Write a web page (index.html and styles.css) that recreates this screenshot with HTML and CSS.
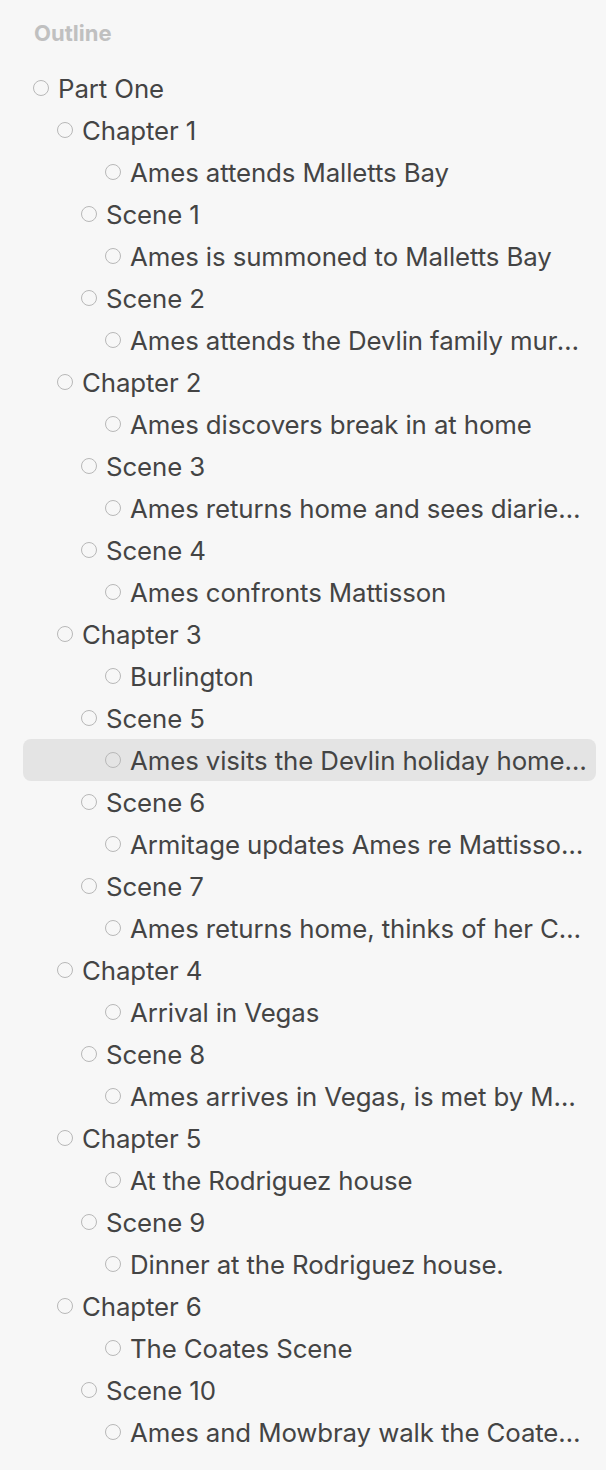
FILE: index.html
```html
<!DOCTYPE html>
<html lang="en">
<head>
  <meta charset="UTF-8" />
  <meta name="viewport" content="width=device-width, initial-scale=1.0"/>
  <title>Outline</title>
  <link rel="stylesheet" href="styles.css">
</head>
<body>
  <div class="sidebar">
    <h2 class="heading">Outline</h2>
    <ul class="outline">
      <li class="row lvl-0"><span class="label">Part One</span></li>
      <li class="row lvl-1"><span class="label">Chapter 1</span></li>
      <li class="row lvl-3"><span class="label">Ames attends Malletts Bay</span></li>
      <li class="row lvl-2"><span class="label">Scene 1</span></li>
      <li class="row lvl-3"><span class="label">Ames is summoned to Malletts Bay</span></li>
      <li class="row lvl-2"><span class="label">Scene 2</span></li>
      <li class="row lvl-3"><span class="label">Ames attends the Devlin family murder scene</span></li>
      <li class="row lvl-1"><span class="label">Chapter 2</span></li>
      <li class="row lvl-3"><span class="label">Ames discovers break in at home</span></li>
      <li class="row lvl-2"><span class="label">Scene 3</span></li>
      <li class="row lvl-3"><span class="label">Ames returns home and sees diaries have been moved</span></li>
      <li class="row lvl-2"><span class="label">Scene 4</span></li>
      <li class="row lvl-3"><span class="label">Ames confronts Mattisson</span></li>
      <li class="row lvl-1"><span class="label">Chapter 3</span></li>
      <li class="row lvl-3"><span class="label">Burlington</span></li>
      <li class="row lvl-2"><span class="label">Scene 5</span></li>
      <li class="row lvl-3 selected"><span class="label">Ames visits the Devlin holiday home, Burlington</span></li>
      <li class="row lvl-2"><span class="label">Scene 6</span></li>
      <li class="row lvl-3"><span class="label">Armitage updates Ames re Mattisson's alibi</span></li>
      <li class="row lvl-2"><span class="label">Scene 7</span></li>
      <li class="row lvl-3"><span class="label">Ames returns home, thinks of her Criminology class</span></li>
      <li class="row lvl-1"><span class="label">Chapter 4</span></li>
      <li class="row lvl-3"><span class="label">Arrival in Vegas</span></li>
      <li class="row lvl-2"><span class="label">Scene 8</span></li>
      <li class="row lvl-3"><span class="label">Ames arrives in Vegas, is met by Mowbray</span></li>
      <li class="row lvl-1"><span class="label">Chapter 5</span></li>
      <li class="row lvl-3"><span class="label">At the Rodriguez house</span></li>
      <li class="row lvl-2"><span class="label">Scene 9</span></li>
      <li class="row lvl-3"><span class="label">Dinner at the Rodriguez house.</span></li>
      <li class="row lvl-1"><span class="label">Chapter 6</span></li>
      <li class="row lvl-3"><span class="label">The Coates Scene</span></li>
      <li class="row lvl-2"><span class="label">Scene 10</span></li>
      <li class="row lvl-3"><span class="label">Ames and Mowbray walk the Coates property</span></li>
    </ul>
  </div>
</body>
</html>
```

FILE: styles.css
```css
body {
  margin: 0;
  background-color: #f7f7f7;
  color: #444;
  font-family: Inter, "Liberation Sans", Arial, sans-serif;
}
.sidebar {
  padding: 20px 10px 0 23px;
}
.heading {
  margin: 0 0 21px 11px;
  font-size: 22px;
  font-weight: 700;
  line-height: 26px;
  color: #c0c0c0;
}
.outline {
  list-style: none;
  margin: 0;
  padding: 0;
}
.row {
  display: flex;
  align-items: center;
  height: 42px;
  padding-right: 8px;
  font-size: 25.8px;
  letter-spacing: -0.1px;
  border-radius: 8px;
}
.row::before {
  content: "";
  flex: none;
  width: 14px;
  height: 14px;
  border: 1.2px solid #b8b8b8;
  border-radius: 50%;
  margin-right: 9px;
}
.label {
  flex: 1;
  min-width: 0;
  white-space: nowrap;
  overflow: hidden;
  text-overflow: ellipsis;
}
.lvl-0 { padding-left: 10px; }
.lvl-1 { padding-left: 34px; }
.lvl-2 { padding-left: 58px; }
.lvl-3 { padding-left: 82px; }
.row.selected {
  background: #e4e4e4;
}
```
